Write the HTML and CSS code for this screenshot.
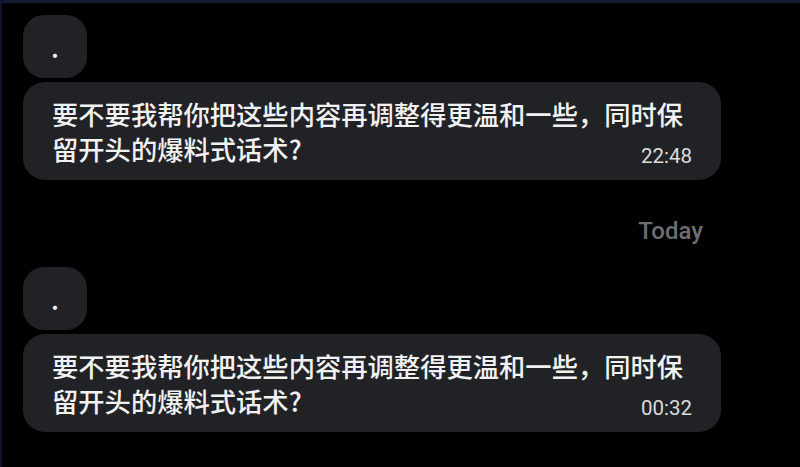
FILE: index.html
```html
<!DOCTYPE html>
<html lang="zh-CN">
<head>
<meta charset="utf-8">
<title>Chat</title>
<link rel="stylesheet" href="styles.css">
</head>
<body>
<div class="chat">
  <div class="group">
    <div class="bubble small"><span class="msg">.</span></div>
    <div class="bubble"><span class="msg">要不要我帮你把这些内容再调整得更温和一些，同时保留开头的爆料式话术?</span><span class="time">22:48</span></div>
  </div>
  <div class="date">Today</div>
  <div class="group">
    <div class="bubble small"><span class="msg">.</span></div>
    <div class="bubble"><span class="msg">要不要我帮你把这些内容再调整得更温和一些，同时保留开头的爆料式话术?</span><span class="time">00:32</span></div>
  </div>
</div>
</body>
</html>
```
FILE: styles.css
```css
html, body {
  margin: 0;
  padding: 0;
  background: #000;
}
body {
  width: 800px;
  height: 467px;
  overflow: hidden;
  box-sizing: border-box;
  border-top: 3px solid #121830;
  border-left: 2px solid #0e1528;
  font-family: "Noto Sans CJK SC", "Noto Sans", sans-serif;
}
.chat {
  display: flex;
  flex-direction: column;
  padding: 12px 0 0 21px;
}
.group {
  display: flex;
  flex-direction: column;
  align-items: flex-start;
  gap: 4px;
}
.bubble {
  display: flow-root;
  box-sizing: border-box;
  max-width: 698px;
  background: #212226;
  color: #f1f1f1;
  border-radius: 22px;
  padding: 14px 29px;
  font-size: 26.3px;
  font-weight: 500;
  line-height: 35px;
}
.bubble.small {
  border-radius: 21px;
  padding: 14px 28px;
}
.time {
  float: right;
  font-family: Roboto, "Liberation Sans", sans-serif;
  font-size: 20.5px;
  font-weight: 400;
  line-height: 20px;
  color: #dcdcdc;
  margin-top: 15px;
  margin-left: 12px;
}
.date {
  font-family: Roboto, "Liberation Sans", sans-serif;
  font-weight: 500;
  font-size: 24px;
  line-height: 28px;
  color: #6e6e72;
  text-align: right;
  padding-right: 97px;
  margin: 37px 0 22px;
}
```
